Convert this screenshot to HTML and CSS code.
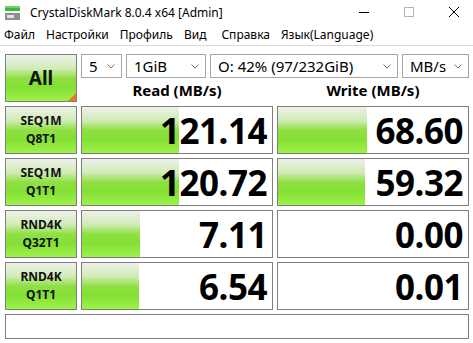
FILE: index.html
```html
<!DOCTYPE html>
<html lang="ru">
<head>
    <meta charset="UTF-8">
    <title>CrystalDiskMark 8.0.4 x64 [Admin]</title>
    <link rel="stylesheet" href="styles.css">
</head>
<body>

<!-- Title bar -->
<div class="titlebar">
    <svg class="app-icon" width="16" height="14" viewBox="0 0 16 14">
        <rect x="0" y="0" width="15" height="5" fill="#3cb83c"/>
        <rect x="0" y="0" width="15" height="2" fill="#6ad46a"/>
        <rect x="0" y="7" width="15" height="7" fill="#8a8f94"/>
        <rect x="2" y="9" width="7" height="3" fill="#dfe3e6"/>
    </svg>
    <span class="title">CrystalDiskMark 8.0.4 x64 [Admin]</span>
    <div class="win-controls">
        <svg width="10" height="10" viewBox="0 0 10 10"><line x1="0" y1="5.5" x2="10" y2="5.5" stroke="#000" stroke-width="1"/></svg>
        <svg width="10" height="10" viewBox="0 0 10 10"><rect x="0.5" y="0.5" width="9" height="9" fill="none" stroke="#b4b4b4" stroke-width="1"/></svg>
        <svg width="10" height="10" viewBox="0 0 10 10"><path d="M0 0 L10 10 M10 0 L0 10" stroke="#000" stroke-width="1"/></svg>
    </div>
</div>

<!-- Menu -->
<div class="menubar">
    <span>Файл</span>
    <span>Настройки</span>
    <span>Профиль</span>
    <span>Вид</span>
    <span class="menu-wide">Справка</span>
    <span>Язык(Language)</span>
</div>

<!-- Benchmark grid -->
<div class="main">
    <div class="test-btn all-btn">All<span class="corner"></span></div>

    <div class="top">
        <div class="selects">
            <div class="select w-count">5<svg class="chev" width="8" height="5" viewBox="0 0 8 5"><path d="M0.5 0.5 L4 4 L7.5 0.5" fill="none" stroke="#777" stroke-width="1"/></svg></div>
            <div class="select w-size">1GiB<svg class="chev" width="8" height="5" viewBox="0 0 8 5"><path d="M0.5 0.5 L4 4 L7.5 0.5" fill="none" stroke="#777" stroke-width="1"/></svg></div>
            <div class="select w-drive">O: 42% (97/232GiB)<svg class="chev" width="8" height="5" viewBox="0 0 8 5"><path d="M0.5 0.5 L4 4 L7.5 0.5" fill="none" stroke="#777" stroke-width="1"/></svg></div>
            <div class="select w-unit">MB/s<svg class="chev" width="8" height="5" viewBox="0 0 8 5"><path d="M0.5 0.5 L4 4 L7.5 0.5" fill="none" stroke="#777" stroke-width="1"/></svg></div>
        </div>
        <div class="headers">
            <div>Read (MB/s)</div>
            <div>Write (MB/s)</div>
        </div>
    </div>

    <div class="test-btn">SEQ1M<br>Q8T1</div>
    <div class="cell"><div class="bar" style="width: 97px;"></div><span>121.14</span></div>
    <div class="cell"><div class="bar" style="width: 89px;"></div><span>68.60</span></div>

    <div class="test-btn">SEQ1M<br>Q1T1</div>
    <div class="cell"><div class="bar" style="width: 97px;"></div><span>120.72</span></div>
    <div class="cell"><div class="bar" style="width: 87px;"></div><span>59.32</span></div>

    <div class="test-btn">RND4K<br>Q32T1</div>
    <div class="cell"><div class="bar" style="width: 58px;"></div><span>7.11</span></div>
    <div class="cell"><span>0.00</span></div>

    <div class="test-btn">RND4K<br>Q1T1</div>
    <div class="cell"><div class="bar" style="width: 57px;"></div><span>6.54</span></div>
    <div class="cell"><span>0.01</span></div>

    <div class="comment"></div>
</div>

</body>
</html>
```

FILE: styles.css
```css
body {
    margin: 0;
    background-color: #ffffff;
    font-family: "Noto Sans", "Open Sans", sans-serif;
    color: #000;
    width: 473px;
    height: 343px;
    overflow: hidden;
}
.titlebar {
    height: 24px;
    display: flex;
    align-items: center;
    padding-left: 5px;
}
.app-icon {
    margin-top: 1px;
}
.title {
    font-size: 12px;
    margin-left: 9px;
    margin-top: 1px;
}
.win-controls {
    margin-left: auto;
    display: flex;
    align-items: center;
    gap: 35px;
    padding-right: 14px;
}
.menubar {
    height: 21px;
    display: flex;
    align-items: center;
    font-size: 12px;
    padding-left: 4px;
    gap: 11px;
    border-bottom: 1px solid #d9d9d9;
}
.menubar .menu-wide {
    margin-left: 4px;
}
.main {
    display: grid;
    grid-template-columns: 72px 192px 192px;
    grid-template-rows: repeat(5, 48px) 25px;
    gap: 4px;
    padding: 8px 4px 0 5px;
}
.test-btn {
    position: relative;
    box-sizing: border-box;
    border: 1px solid #7f7f7f;
    background: linear-gradient(to bottom, #eef1ec 0%, #d0ebb4 30%, #8fe043 50%, #84e034 70%, #9ef24a 100%);
    display: flex;
    align-items: center;
    justify-content: center;
    text-align: center;
    font-weight: bold;
    font-size: 12px;
    line-height: 18px;
    color: #111;
}
.all-btn {
    font-size: 19px;
}
.corner {
    position: absolute;
    right: 0;
    bottom: 0;
    width: 0;
    height: 0;
    border-left: 8px solid transparent;
    border-bottom: 8px solid #f07820;
}
.top {
    grid-column: 2 / 4;
    display: flex;
    flex-direction: column;
}
.selects {
    display: flex;
    gap: 4px;
    height: 24px;
}
.select {
    box-sizing: border-box;
    border: 1px solid #a6a6a6;
    display: flex;
    align-items: center;
    justify-content: space-between;
    padding: 0 6px 0 7px;
    font-size: 15px;
}
.w-count { width: 41px; }
.w-size { width: 80px; }
.w-drive { width: 188px; }
.w-unit { width: 67px; }
.headers {
    display: grid;
    grid-template-columns: 192px 192px;
    gap: 4px;
    flex: 1;
    align-items: center;
    text-align: center;
    font-weight: bold;
    font-size: 15px;
}
.cell {
    position: relative;
    box-sizing: border-box;
    border: 1px solid #7f7f7f;
    background-color: #fff;
    display: flex;
    align-items: center;
    justify-content: flex-end;
    padding-right: 5px;
}
.cell .bar {
    position: absolute;
    left: 0;
    top: 0;
    bottom: 0;
    background: linear-gradient(to bottom, #eef1ec 0%, #d0ebb4 30%, #8fe043 50%, #84e034 70%, #9ef24a 100%);
}
.cell span {
    position: relative;
    font-weight: bold;
    font-size: 35px;
    line-height: 1;
    letter-spacing: -0.5px;
}
.comment {
    grid-column: 1 / 4;
    box-sizing: border-box;
    border: 1px solid #7f7f7f;
    background-color: #fff;
}
```
